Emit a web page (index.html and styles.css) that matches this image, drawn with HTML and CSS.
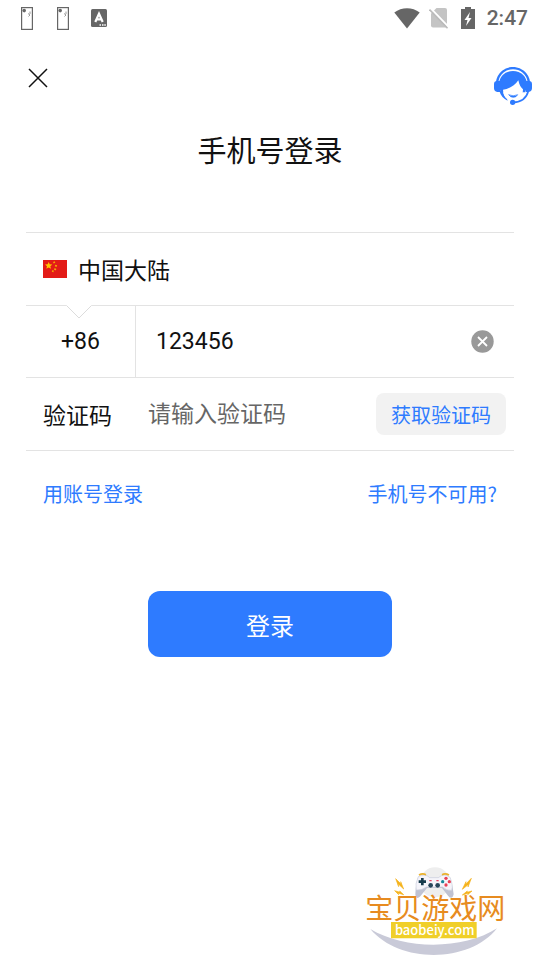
FILE: index.html
```html
<!DOCTYPE html>
<html lang="zh-CN">
<head>
<meta charset="utf-8">
<meta name="viewport" content="width=device-width, initial-scale=1">
<title>手机号登录</title>
<link rel="stylesheet" href="styles.css">
</head>
<body>
<div class="screen">
  <div class="status">
    <div class="status-left">
      <svg width="12" height="23" viewBox="0 0 12 23" aria-hidden="true"><rect x=".6" y=".6" width="10.8" height="21.8" fill="#fff" stroke="#666" stroke-width="1.2"/><circle cx="3.2" cy="3.6" r="1.8" fill="#666"/><path d="M9 4.500v2.500M7 6.500l2 1.500-1.500 1.500" fill="none" stroke="#999"/></svg>
      <svg width="12" height="23" viewBox="0 0 12 23" aria-hidden="true"><rect x=".6" y=".6" width="10.8" height="21.8" fill="#fff" stroke="#666" stroke-width="1.2"/><circle cx="3.2" cy="3.6" r="1.8" fill="#666"/><path d="M9 4.500v2.500M7 6.500l2 1.500-1.500 1.500" fill="none" stroke="#999"/></svg>
      <svg class="status-app" width="16" height="18" viewBox="0 0 16 18" aria-hidden="true"><rect width="16" height="18" rx="1.500" fill="#666"/><path d="M4.300 13 8 4.700 11.700 13M5.800 10.400h4.400" fill="none" stroke="#fff" stroke-width="2.200"/><path d="M8.500 16h1.500M11 16h1.500M13.300 16h1.500" stroke="#fff" stroke-width="1.300"/></svg>
    </div>
    <div class="status-right">
      <svg width="26" height="21" viewBox="0 0 26 21" aria-hidden="true"><path d="M.3 4.500C7.500-1.200 18.500-1.200 25.700 4.500L13 20.500z" fill="#666"/></svg>
      <svg class="status-sim" width="20" height="21" viewBox="0 0 20 21" aria-hidden="true"><path d="M7.500 0H16q2 0 2 2v16q0 1.500-1.500 1.500H4q-2 0-2-2V5.500z" fill="#c4c4c4"/><path d="M1.500.200 20 19.400" stroke="#fff" stroke-width="2"/><path d="M.5 1.500 18.500 20.200" stroke="#bbb" stroke-width="1.600"/></svg>
      <svg width="14" height="22" viewBox="0 0 14 22" aria-hidden="true"><path d="M4 0h6v2h4v20H0V2h4z" fill="#666"/><path d="M9 5 3.500 13H6.500L5 19 10.500 11H7.500z" fill="#fff"/></svg>
      <span class="clock">2:47</span>
    </div>
  </div>

  <header class="topbar">
    <button class="icon-btn close" type="button" aria-label="关闭"><svg width="20" height="20" viewBox="0 0 20 20"><path d="M1 1 19 19M19 1 1 19" stroke="#111" stroke-width="1.500"/></svg></button>
    <button class="icon-btn" type="button" aria-label="客服">
      <svg width="38" height="38" viewBox="0 0 114 114">
        <path d="M9 46C18-11 96-11 105 46" fill="none" stroke="#2e7bff" stroke-width="7"/>
        <path d="M15 58C13 30 32 12 57 12S101 30 99 58L94 76H20z" fill="#2e7bff"/>
        <path d="M0 52Q0 42 9 42H18V75H10Q0 73 0 64zM114 52Q114 42 105 42H96V75H104Q114 73 114 64z" fill="#2e7bff"/>
        <path d="M16 72C20 86 29 96 41 101L39 96C31 89 27 80 27 68z" fill="#2e7bff"/>
        <path d="M27 68C44 66 62 56 73 40 76 54 81 62 87 67 87 86 75 99 57 99S28 88 27 68z" fill="#fff"/>
        <path d="M44 83Q58 90 71 83Q67 91 58 91T44 83z" fill="#2e7bff" stroke="#2e7bff" stroke-width="2"/>
        <path d="M103 72C98 92 82 105 58 106" fill="none" stroke="#2e7bff" stroke-width="5"/>
        <circle cx="56" cy="106" r="8" fill="#2e7bff"/>
      </svg>
    </button>
  </header>

  <main>
    <h1>手机号登录</h1>
    <form class="form">
      <button class="row region" type="button">
        <svg width="24" height="18" viewBox="0 0 72 54" aria-hidden="true"><path d="M0 0h72v54H0z" fill="#e31b17"/><path d="M17 6l3 7 8 .5-6 5 2 8-7-4-7 4 2-8-6-5 8-.5z" fill="#ffc400"/><path d="M31 8l5-2M36 17l6 1M34 26l5 3M27 33l5 1" stroke="#f3a800" stroke-width="5"/></svg>
        <span>中国大陆</span>
      </button>
      <div class="row phone">
        <svg class="notch" width="26" height="14" viewBox="0 0 26 14" aria-hidden="true"><path d="M0 0H26L13 13z" fill="#fff"/><path d="M.5.500 13 13 25.500.500" fill="none" stroke="#dcdcdc"/></svg>
        <label class="code" for="phone">+86</label>
        <input id="phone" type="tel" value="123456">
        <button class="icon-btn clear" type="button" aria-label="清除"><svg width="23" height="23" viewBox="0 0 23 23"><circle cx="11.500" cy="11.500" r="11.200" fill="#999"/><path d="M7 7 16 16M16 7 7 16" stroke="#fff" stroke-width="1.800"/></svg></button>
      </div>
      <div class="row verify">
        <label for="sms">验证码</label>
        <input id="sms" type="text" placeholder="请输入验证码">
        <button class="get-code" type="button">获取验证码</button>
      </div>
      <div class="links"><a href="#account">用账号登录</a><a href="#help">手机号不可用?</a></div>
      <button class="login" type="submit">登录</button>
    </form>
  </main>

  <footer class="brand">
    <svg width="170" height="105" viewBox="0 0 510 315" role="img" aria-label="宝贝游戏网">
      <circle cx="255" cy="82" r="45" fill="#eee"/>
      <path d="M61 222C165 285 340 285 441 220 360 325 148 327 61 222z" fill="#c9cad8"/>
      <path d="M205 65Q226 54 239 68H265Q282 53 300 67Q306 80 311 118Q306 137 294 122L276 99H231L211 124Q198 136 196 118Q198 75 205 65z" fill="#bfc2d2"/>
      <path d="M205 65Q226 54 239 68H265Q282 53 300 67Q310 90 305 106Q289 107 278 96H229Q214 107 199 105Q194 88 205 65z" fill="#f5f4fa" stroke="#cfd1de" stroke-width="2"/>
      <path d="M207 60q10-6 21-1M276 59q10-5 21 1" fill="none" stroke="#eab12c" stroke-width="5"/>
      <path d="M217 69v22M206 80h22" stroke="#173b4c" stroke-width="8"/>
      <circle cx="242" cy="91" r="7" fill="#27465a"/><circle cx="263" cy="91" r="7" fill="#27465a"/>
      <path d="M238 77h7M259 77h7" stroke="#e64563" stroke-width="4"/>
      <circle cx="288" cy="70" r="5" fill="#e94057"/><circle cx="288" cy="90" r="5" fill="#e94057"/><circle cx="278" cy="80" r="5" fill="#16879a"/><circle cx="298" cy="80" r="5" fill="#e94057"/>
      <path d="M137 71l17 17-2-8 9 22-17-16 2 9zM134 107l16 5-1-4 12 11-17-5 2 5zM364 70l-17 18 1-8-11 23 19-15-2 8zM366 108l-15 4 1-4-15 12 18-5-2 4z" fill="#f5b21b" stroke="#f5b21b" stroke-width="2"/>
      <path d="M123 201h257v49H123z" fill="#f0cf28"/>
      <text class="brand-name" x="46" y="192">宝贝游戏网</text>
      <text class="brand-url" x="254" y="239" text-anchor="middle">baobeiy.com</text>
    </svg>
  </footer>
</div>
</body>
</html>
```
FILE: styles.css
```css
* { box-sizing: border-box; }
body {
  margin: 0;
  background: #fff;
  color: #111;
  font-family: Roboto, "Noto Sans CJK SC", sans-serif;
  font-size: 23px;
}
button, input { font: inherit; color: inherit; border: 0; padding: 0; background: none; }
svg { display: block; flex: none; }
.screen { min-height: 100vh; display: flex; flex-direction: column; }

.status { display: flex; justify-content: space-between; height: 36px; padding: 0 12px 0 21px; align-items: center; }
.status-left { display: flex; align-items: center; gap: 24px; }
.status-app { margin-left: -2px; }
.status-right { display: flex; align-items: center; gap: 12px; }
.status-sim { margin-left: -3px; }
.clock { font-size: 21px; line-height: 24px; font-weight: 500; color: #666; }

.topbar { display: flex; justify-content: space-between; align-items: flex-start; padding: 31px 8px 0 28px; }
.icon-btn { display: block; cursor: pointer; }
.close { margin-top: 1px; }

h1 { margin: 25px 0 0; text-align: center; font-size: 29px; line-height: 44px; font-weight: 400; }
.form { margin: 58px 26px 0; border-top: 1px solid #e3e3e3; }
.row { display: flex; align-items: center; width: 100%; height: 73px; border-bottom: 1px solid #e3e3e3; }
.region { padding: 0 17px; gap: 11px; text-align: left; }
.phone { position: relative; height: 72px; padding-right: 20px; }
.notch { position: absolute; top: -1px; left: 40px; }
.code { width: 110px; align-self: stretch; display: flex; align-items: center; justify-content: center; border-right: 1px solid #e3e3e3; }
.row input { flex: 1; min-width: 0; height: 36px; outline: 0; }
.phone input { padding-left: 20px; }
.verify { padding: 0 8px 0 17px; }
.verify input { padding-left: 36px; }
.verify input::placeholder { color: #666; opacity: 1; }
.get-code { width: 130px; height: 42px; border-radius: 8px; background: #f2f2f2; color: #2e7bff; font-size: 20px; }
.links { display: flex; justify-content: space-between; padding: 27px 17px 0; font-family: "Noto Sans CJK SC", sans-serif; font-size: 20px; line-height: 32px; }
.links a { color: #2e7bff; text-decoration: none; }
.login { display: block; width: 50%; height: 66px; margin: 81px auto 0; border-radius: 12px; background: #2e7bff; color: #fff; font-size: 24px; }

.brand { margin-top: auto; padding-right: 20px; display: flex; justify-content: flex-end; }
.brand-name { font-family: "Noto Sans CJK SC", sans-serif; font-size: 84px; font-weight: 400; fill: #e78b20; }
.brand-url { font-family: "Noto Sans CJK SC", sans-serif; font-size: 39px; font-weight: 500; fill: #fff; }
```
